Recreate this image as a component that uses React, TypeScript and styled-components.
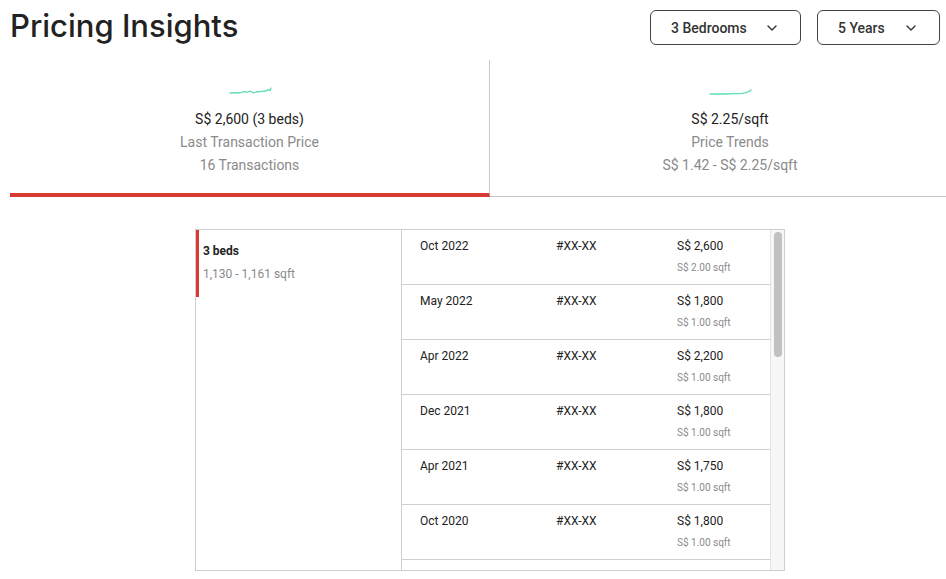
import React from 'react';
import styled, { createGlobalStyle } from 'styled-components';

type Transaction = {
  date: string;
  unit: string;
  price: string;
  psf: string;
};

const transactions: Transaction[] = [
  { date: 'Oct 2022', unit: '#XX-XX', price: 'S$ 2,600', psf: 'S$ 2.00 sqft' },
  { date: 'May 2022', unit: '#XX-XX', price: 'S$ 1,800', psf: 'S$ 1.00 sqft' },
  { date: 'Apr 2022', unit: '#XX-XX', price: 'S$ 2,200', psf: 'S$ 1.00 sqft' },
  { date: 'Dec 2021', unit: '#XX-XX', price: 'S$ 1,800', psf: 'S$ 1.00 sqft' },
  { date: 'Apr 2021', unit: '#XX-XX', price: 'S$ 1,750', psf: 'S$ 1.00 sqft' },
  { date: 'Oct 2020', unit: '#XX-XX', price: 'S$ 1,800', psf: 'S$ 1.00 sqft' },
];

const Chevron = () => (
  <svg width="10" height="6" viewBox="0 0 10 6" fill="none">
    <path d="M1 1l4 4 4-4" stroke="#333" strokeWidth="1.4" strokeLinecap="round" strokeLinejoin="round" />
  </svg>
);

const Sparkline: React.FC<{ points: string }> = ({ points }) => (
  <svg width="44" height="14" viewBox="0 0 44 14" fill="none">
    <polyline points={points} stroke="#5fdcb8" strokeWidth="1.3" strokeLinejoin="round" strokeLinecap="round" />
  </svg>
);

export default function App() {
  return (
    <>
      <GlobalStyle />
      <SPage>
        <SHeader>
          <STitle>Pricing Insights</STitle>
          <SFilters>
            <SSelect $width={151}>
              3 Bedrooms
              <Chevron />
            </SSelect>
            <SSelect $width={123}>
              5 Years
              <Chevron />
            </SSelect>
          </SFilters>
        </SHeader>

        <STabs>
          <STab $active>
            <Sparkline points="2,10 8,9.6 12,10 16,8.6 19,9.4 22,8 25,10 28,9 34,8.4 38,8 40,6.6 42,7.6 43,5" />
            <SValue>S$ 2,600 (3 beds)</SValue>
            <SLabel>Last Transaction Price</SLabel>
            <SLabel>16 Transactions</SLabel>
          </STab>
          <STab>
            <Sparkline points="2,11 10,10.8 18,11 26,10.6 34,10.4 38,9.6 41,8.4 43,7" />
            <SValue>S$ 2.25/sqft</SValue>
            <SLabel>Price Trends</SLabel>
            <SLabel>S$ 1.42 - S$ 2.25/sqft</SLabel>
          </STab>
        </STabs>

        <STable>
          <SGroup>
            <SGroupItem $active>
              <SGroupName>3 beds</SGroupName>
              <SGroupSize>1,130 - 1,161 sqft</SGroupSize>
            </SGroupItem>
          </SGroup>
          <SRows>
            {transactions.map((t, i) => (
              <SRow key={i}>
                <SCell>{t.date}</SCell>
                <SCell>{t.unit}</SCell>
                <SPriceCell>
                  {t.price}
                  <SPsf>{t.psf}</SPsf>
                </SPriceCell>
              </SRow>
            ))}
          </SRows>
          <SScrollTrack>
            <SScrollThumb />
          </SScrollTrack>
        </STable>
      </SPage>
    </>
  );
}

const GlobalStyle = createGlobalStyle`
  html, body {
    margin: 0;
    padding: 0;
    background: #fff;
    overflow: hidden;
  }
  body {
    font-family: Roboto, "Liberation Sans", sans-serif;
    color: #222;
  }
  * {
    box-sizing: border-box;
  }
`;

const SPage = styled.div`
  width: 946px;
  height: 579px;
  padding-left: 10px;
  overflow: hidden;
`;

const SHeader = styled.div`
  display: flex;
  justify-content: space-between;
  align-items: flex-start;
  height: 60px;
`;

const STitle = styled.h1`
  margin: 0;
  padding-top: 6px;
  font-family: Inter, "Open Sans", sans-serif;
  font-size: 31px;
  font-weight: 500;
  line-height: 40px;
  color: #222;
`;

const SFilters = styled.div`
  display: flex;
  gap: 16px;
  padding-top: 10px;
  padding-right: 6px;
`;

const SSelect = styled.div<{ $width: number }>`
  width: ${({ $width }) => $width}px;
  height: 35px;
  display: flex;
  align-items: center;
  justify-content: space-between;
  padding: 0 23px 0 20px;
  border: 1px solid #444;
  border-radius: 6px;
  font-size: 14px;
  font-weight: 500;
  color: #333;
`;

const STabs = styled.div`
  display: flex;
  height: 137px;
  width: 960px;
`;

const STab = styled.div<{ $active?: boolean }>`
  width: 480px;
  flex-shrink: 0;
  display: flex;
  flex-direction: column;
  align-items: center;
  padding-top: 23px;
  border-right: ${({ $active }) => ($active ? '1px solid #c8c8c8' : 'none')};
  border-bottom: ${({ $active }) => ($active ? '4px solid #d93a34' : '1px solid #c8c8c8')};

  svg {
    margin-bottom: 11px;
  }
`;

const SValue = styled.div`
  font-size: 14px;
  line-height: 23px;
  color: #222;
`;

const SLabel = styled.div`
  font-size: 14px;
  line-height: 23px;
  color: #8a8a8a;
`;

const STable = styled.div`
  margin: 32px 0 0 185px;
  width: 590px;
  height: 342px;
  display: flex;
  border: 1px solid #cfcfcf;
`;

const SGroup = styled.div`
  width: 206px;
  border-right: 1px solid #cfcfcf;
`;

const SGroupItem = styled.div<{ $active?: boolean }>`
  height: 67px;
  padding: 13px 0 0 4px;
  border-left: 3px solid ${({ $active }) => ($active ? '#d93a34' : 'transparent')};
`;

const SGroupName = styled.div`
  font-size: 12px;
  font-weight: 700;
  line-height: 16px;
  color: #222;
`;

const SGroupSize = styled.div`
  margin-top: 7px;
  font-size: 12px;
  line-height: 16px;
  color: #8a8a8a;
`;

const SRows = styled.div`
  flex: 1;
  overflow: hidden;
`;

const SRow = styled.div`
  height: 55px;
  display: grid;
  grid-template-columns: 136px 121px 1fr;
  padding: 9px 0 0 18px;
  border-bottom: 1px solid #cfcfcf;
`;

const SCell = styled.div`
  font-size: 12px;
  line-height: 14px;
  color: #222;
`;

const SPriceCell = styled(SCell)`
  display: flex;
  flex-direction: column;
`;

const SPsf = styled.span`
  margin-top: 9px;
  font-size: 10px;
  line-height: 12px;
  color: #8a8a8a;
`;

const SScrollTrack = styled.div`
  width: 14px;
  padding: 2px 2px 0 3px;
  background: #f7f7f7;
  border-left: 1px solid #e4e4e4;
`;

const SScrollThumb = styled.div`
  height: 125px;
  border-radius: 5px;
  background: #c1c1c1;
`;
